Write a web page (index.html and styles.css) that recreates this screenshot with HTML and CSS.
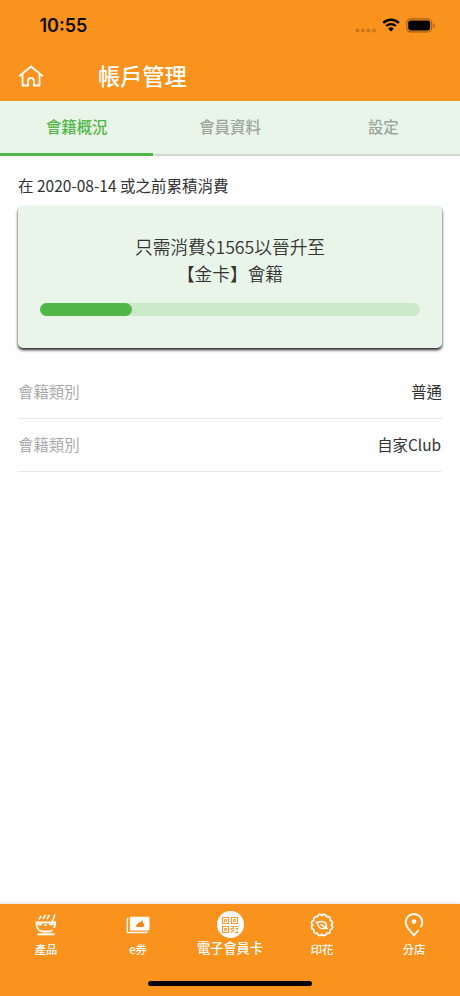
FILE: index.html
```html
<!DOCTYPE html>
<html lang="zh-Hant">
<head>
<meta charset="utf-8">
<title>帳戶管理</title>
<link rel="stylesheet" href="styles.css">
</head>
<body>
<div class="app">
  <header class="header">
    <div class="status">
      <span class="time">10:55</span>
      <div class="indicators">
        <svg class="dots" width="22" height="5" viewBox="0 0 22 5"><circle cx="2.5" cy="2.5" r="2"/><circle cx="8" cy="2.5" r="2"/><circle cx="13.5" cy="2.5" r="2"/><circle cx="19" cy="2.5" r="2"/></svg>
        <svg class="wifi" width="18" height="14" viewBox="0 0 18 14"><path d="M1.2 4.9a11.2 11.2 0 0 1 15.6 0M4.2 8a7 7 0 0 1 9.6 0" fill="none" stroke="#000" stroke-width="2.4"/><path d="M9 13.5 6.2 10.7a4 4 0 0 1 5.6 0z"/></svg>
        <svg class="battery" width="30" height="15" viewBox="0 0 30 15"><rect x=".7" y=".9" width="25" height="13" rx="4" fill="none" stroke="#a96114" stroke-width="1.2"/><rect x="2.2" y="2.4" width="22" height="10" rx="2.4"/><path d="M27.4 5.2c2 .8 2 3.8 0 4.6z" fill="#a96114"/></svg>
      </div>
    </div>
    <div class="titlebar">
      <svg class="home" width="26" height="22" viewBox="0 0 26 22"><path d="M1.2 11.2 13 1.5l11.8 9.7M4.5 9v11.5h5.6v-4.7a2.900 2.900 0 0 1 5.800 0v4.700h5.600V9" fill="none" stroke="#fff" stroke-width="1.800" stroke-linejoin="round"/></svg>
      <h1 class="title">帳戶管理</h1>
    </div>
  </header>
  <nav class="tabs">
    <span class="tab active">會籍概況</span>
    <span class="tab">會員資料</span>
    <span class="tab">設定</span>
  </nav>
  <main class="content">
    <p class="caption">在 2020-08-14 或之前累積消費</p>
    <section class="card">
      <p class="message">只需消費$1565以晉升至<br>【金卡】會籍</p>
      <div class="progress"><div class="progress-fill"></div></div>
    </section>
    <div class="row"><span class="label">會籍類別</span><span class="value">普通</span></div>
    <div class="row"><span class="label">會籍類別</span><span class="value club">自家Club</span></div>
  </main>
  <footer class="footer">
    <nav class="bottom-nav">
      <div class="item">
        <svg class="icon" width="24" height="26" viewBox="0 0 24 26" fill="none" stroke="#fff" stroke-width="1.8"><path d="M5 7.500 7.200 3.800M9 7l2.500-4.200M13 7l2.500-4.200M17.300 12l3.700-9.500" stroke-width="1.600"/><path d="M20 16c1-1.500 1.300-3 1.300-5.500H2.500c0 6 2.500 9 6.500 9h5.500c1.700 0 3-.6 4-1.700"/><path d="M4 12.500h4M10 13.200h3M15 12.500h5" stroke-width="1.400"/><path d="M3.500 22.300h17" stroke-width="2"/></svg>
        <span>產品</span>
      </div>
      <div class="item">
        <svg class="icon" width="24" height="26" viewBox="0 0 24 26"><rect x="3.800" y="4.800" width="19.700" height="13.700" rx="1.200" fill="#fff"/><path d="M2.500 6.500H1.300v14h19.500v-1.200" fill="none" stroke="#fff" stroke-width="1.300"/><path d="M8.700 14.600c1.600-.3 1.500-1.800 3-3.200 1.600-1.600 3.700-1.400 4.900-3.500-.2 2.200.7 2.300.5 3.800l1.500-.3-.8 1.700 1 .6c-1.700 1.500-4.300 1.500-6.300 1.200z" fill="#f78418"/></svg>
        <span>e券</span>
      </div>
      <div class="item featured">
        <span class="qr"><svg width="18" height="18" viewBox="0 0 18 18" fill="none" stroke="#f49a38"><path d="M1.500 1.500h6v6h-6zM10.500 1.500h6v6h-6zM1.500 10.500h6v6h-6z" stroke-width="1.200"/><path d="M3.500 3.500h2v2h-2zM12.500 3.500h2v2h-2zM3.500 12.500h2v2h-2z" stroke-width="1"/><path d="M10 10.500h2.500v2H10v1.500M14 10.500h3M14.500 12.500h2v1.500M10 16.500l3.500-3M13.500 16.500h3.500M16.500 15v2" stroke-width="1.200"/></svg></span>
        <span>電子會員卡</span>
      </div>
      <div class="item">
        <svg class="icon" width="24" height="26" viewBox="0 0 24 26" fill="none" stroke="#fff"><path transform="translate(0 1)" stroke-width="1.700" stroke-linejoin="round" d="M21.300 12A2.500 2.500 0 0 1 20.050 16.650 2.500 2.500 0 0 1 16.650 20.050 2.500 2.500 0 0 1 12 21.300 2.500 2.500 0 0 1 7.350 20.050 2.500 2.500 0 0 1 3.950 16.650 2.500 2.500 0 0 1 2.700 12 2.500 2.500 0 0 1 3.950 7.350 2.500 2.500 0 0 1 7.350 3.950 2.500 2.500 0 0 1 12 2.700 2.500 2.500 0 0 1 16.650 3.950 2.500 2.500 0 0 1 20.050 7.350 2.500 2.500 0 0 1 21.300 12z"/><path d="M6.500 10.500c3-.9 8-1.800 9.600 1.300.6 1.200.2 2.700-.4 4.200-3 1.200-6 .3-7-1.700-.7-1.500-.8-2.700-2.200-3.800zM10.500 12.200l7.200 4.600" stroke-width="1.500"/></svg>
        <span>印花</span>
      </div>
      <div class="item">
        <svg class="icon" width="24" height="26" viewBox="0 0 24 26"><path d="M18.600 15.200c1.300-2 1.700-3.200 1.700-4.900a8.300 8.300 0 0 0-16.600 0c0 5.100 5 9.200 8.300 13l4.600-5.300" fill="none" stroke="#fff" stroke-width="1.800"/><circle cx="12" cy="9.600" r="2.300" fill="#fff"/></svg>
        <span>分店</span>
      </div>
    </nav>
    <div class="home-bar"></div>
  </footer>
</div>
</body>
</html>
```

FILE: styles.css
```css
* { box-sizing: border-box; }
body { margin: 0; font-family: "Noto Sans CJK TC", sans-serif; color: #333; background: #fefefe; }
h1, p { margin: 0; }
svg { display: block; }
.app { display: flex; flex-direction: column; height: 996px; }
.header { height: 101px; background: #f9931e; flex: none; }
.status { height: 50px; display: flex; justify-content: space-between; padding: 0 24px 0 39.5px; }
.time { font: 600 18px/52px Inter, sans-serif; color: #100b04; }
.indicators { display: flex; height: 50px; align-items: center; }
.dots { margin: 10px 5px 0 0; fill: #c9761b; }
.wifi { margin-right: 6px; }
.titlebar { height: 51px; display: flex; align-items: center; padding-left: 18px; }
.home { margin-right: 54px; }
.title { font-size: 22.2px; line-height: 50px; height: 52px; font-weight: 500; color: #fff; }
.tabs { display: grid; grid-template-columns: repeat(3, 1fr); height: 55px; background: #eaf5e9; flex: none; }
.tab { text-align: center; font-size: 15.4px; line-height: 50px; font-weight: 500; color: #9ba69b; border-bottom: 2px solid #ced8cd; }
.tab.active { color: #50b748; border-bottom: 3px solid #50b748; }
.content { flex: 1; padding: 16px 18px 0; }
.caption { font-size: 15.5px; line-height: 26px; height: 34px; }
.card { height: 142px; padding: 27px 22px 0; background: #eaf5e9; border-radius: 5px; box-shadow: 0 2px 3px #222; }
.message { text-align: center; font-size: 17.7px; line-height: 27px; font-weight: 350; }
.progress { margin-top: 16px; height: 13px; border-radius: 7px; background: #cce9ca; }
.progress-fill { width: 24.2%; height: 100%; border-radius: 7px; background: #50b748; }
.row { display: flex; justify-content: space-between; height: 53px; border-bottom: 1px solid #e8e8e8; font-size: 15.4px; line-height: 51px; }
.card + .row { margin-top: 18px; }
.label { color: #a4a4a4; font-weight: 350; }
.club { padding-right: 1px; }
.footer { height: 92px; background: #f9931e; box-shadow: 0 -1px 2px #e9e3da; display: flex; flex-direction: column; align-items: center; flex: none; }
.bottom-nav { width: 100%; height: 77px; display: grid; grid-template-columns: repeat(5, 1fr); }
.item { display: flex; flex-direction: column; align-items: center; padding-top: 8px; color: #fff; font-size: 11.3px; line-height: 17px; font-weight: 500; white-space: nowrap; }
.icon { margin-bottom: 3px; }
.featured { padding-top: 7px; font-size: 13.2px; }
.qr { width: 27px; height: 27px; border-radius: 50%; background: #fff; display: grid; place-items: center; margin-bottom: 1px; }
.home-bar { width: 164px; height: 5px; border-radius: 3px; background: #000; }
```
